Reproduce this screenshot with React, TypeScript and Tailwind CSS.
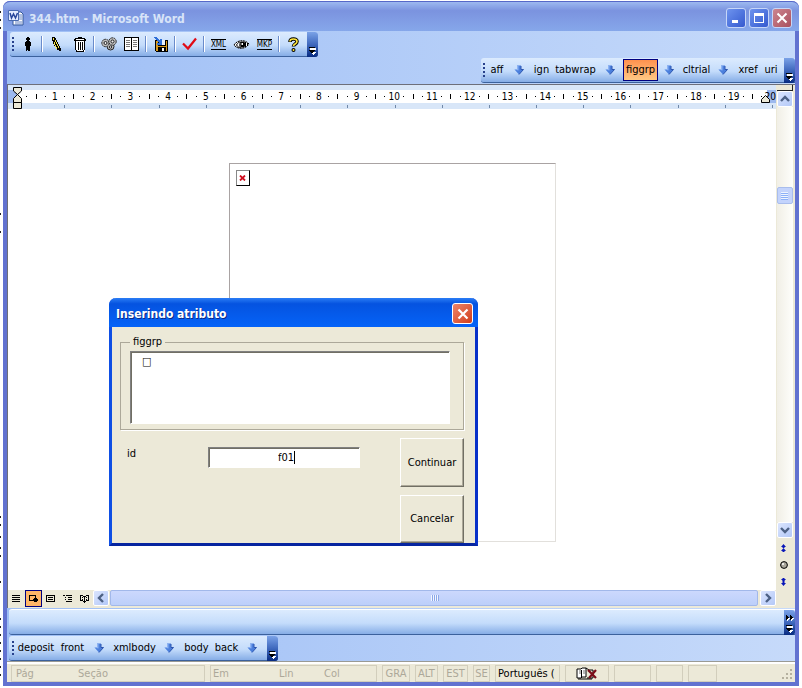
import type { ReactNode } from "react";

const UI_FONT = "font-['DejaVu_Sans_Condensed','Noto_Sans',sans-serif]";
const BAR = "bg-linear-to-b from-[#dcebfe] via-[#c4dcfb] via-55% to-[#86ade6] border-b border-[#3b619c]";

function Grip() {
  return (
    <span className="flex w-[3px] shrink-0 flex-col justify-center gap-[2px]" aria-hidden="true">
      {[0, 1, 2, 3].map((i) => (
        <i key={i} className="size-[2px] bg-[#27418c]" />
      ))}
    </span>
  );
}

function Cap({ more = false }: { more?: boolean }) {
  return (
    <button
      type="button"
      aria-label="Toolbar options"
      className="-mb-px flex w-[11px] shrink-0 flex-col items-center justify-end rounded-r-[3px] bg-linear-to-b from-[#7ba2e7] via-[#3f68bd] to-[#072a81] pb-[2px]"
    >
      <svg width="9" height={more ? 20 : 8} viewBox={more ? "0 -12 9 20" : "0 0 9 8"} shapeRendering="crispEdges">
        {more && (
          <>
            <path d="M2 -9v5l3-2.500zM6 -9v5l3-2.500z" fill="#fff" />
            <path d="M1 -10v5l3-2.500zM5 -10v5l3-2.500z" fill="#000" />
          </>
        )}
        <path d="M2 1h6v2H2zM3 5h5l-2.500 3z" fill="#fff" />
        <path d="M1 0h6v1H1zM1 3h6l-3 4z" fill="#000" />
      </svg>
    </button>
  );
}

function Separator() {
  return (
    <span className="flex w-[6px] shrink-0 justify-center py-[4px]">
      <i className="w-px bg-[#6a8ccb]" />
      <i className="w-px bg-white" />
    </span>
  );
}

function Tool({ label, children }: { label: string; children: ReactNode }) {
  return (
    <button type="button" aria-label={label} className="flex w-[23px] shrink-0 items-center justify-center">
      {children}
    </button>
  );
}

function Expand() {
  return (
    <button type="button" aria-label="Expand" className="flex w-[23px] shrink-0 items-center justify-center pr-[2px]">
      <svg width="10" height="10" viewBox="0 0 10 10">
        <path d="M3 .5h4v4h2.500L5 9.500.5 4.500H3z" fill="#4b7fdc" />
        <path d="M3 .5h1.500v5L2 5 .5 4.500H3z" fill="#8db4f4" />
        <path d="M7 1v3.500h2.500L5 9.500" fill="none" stroke="#2d55ae" />
      </svg>
    </button>
  );
}

function TextTool({ width, children }: { width: string; children: ReactNode }) {
  return (
    <button type="button" className={`flex shrink-0 items-center justify-center ${width}`}>
      {children}
    </button>
  );
}

function TitleBar() {
  const button = "flex size-[20px] items-center justify-center rounded-[3px] border border-[#c6d6f8]";
  return (
    <header className="-mx-[4px] flex h-[30px] shrink-0 items-center rounded-t-[7px] border-t border-[#5668c8] bg-linear-to-b from-[#9db9f0] via-[#7b93df] via-30% to-[#86a7ea] pr-[7px] pl-[5px]">
      <svg width="16" height="16" viewBox="0 0 16 16" className="mt-[2px]">
        <path d="M5 2h8l2 2v11H5z" fill="#fff" stroke="#33569a" />
        <path d="M11 5h3M11 7h3M11 9h3M7 12h7M7 14h7" stroke="#6483c4" />
        <path d="M.5.5h10v10H.5z" fill="#e4edff" stroke="#4a6bb0" />
        <path d="M2 3l1.500 5L5.500 4l2 4L9.500 3" fill="none" stroke="#27479b" strokeWidth="1.500" />
      </svg>
      <h1 className="ml-[5px] pt-[4px] text-[12px] leading-[16px] font-bold text-[#d8e4f8]">344.htm - Microsoft Word</h1>
      <div className="ml-auto flex gap-[3px] pt-[3px]">
        <button type="button" aria-label="Minimize" className={`${button} bg-linear-to-br from-[#6e93ee] to-[#3659cf]`}>
          <svg width="12" height="12"><path d="M2 8h6v3H2z" fill="#fff" /></svg>
        </button>
        <button type="button" aria-label="Maximize" className={`${button} bg-linear-to-br from-[#6e93ee] to-[#3659cf]`}>
          <svg width="12" height="12" shapeRendering="crispEdges"><path d="M1 1h10v10H1zM2 4v6h8V4z" fill="#fff" fillRule="evenodd" /></svg>
        </button>
        <button type="button" aria-label="Close" className={`${button} bg-linear-to-br from-[#cc8590] to-[#a9505e]`}>
          <svg width="12" height="12"><path d="M1.500 1.500l9 9M10.500 1.500l-9 9" stroke="#fff" strokeWidth="2" /></svg>
        </button>
      </div>
    </header>
  );
}

function MainToolbar() {
  return (
    <div className="flex h-[26px] shrink-0 pt-px">
      <div role="toolbar" aria-label="Markup" className={`ml-[3px] flex w-[308px] rounded-[3px] ${BAR}`}>
        <div className="flex w-[6px] justify-center pl-px"><Grip /></div>
        <Tool label="Author">
          <svg width="6" height="14" shapeRendering="crispEdges">
            <path d="M2 0h2v1h1v2H4v1H2V3H1V1h1zM1 4h4v1h1v4H5v5H3v-1H2v1H1V9H0V5h1z" />
          </svg>
        </Tool>
        <Separator />
        <Tool label="Edit">
          <svg width="10" height="15" viewBox="0 0 10 15" shapeRendering="crispEdges">
            <path d="M0 0h3v1h1v2h1v2h1v2h1v2h1v2h1v3H7v-1H5v-1H4v-2H3V9H2V7H1V4H0z" />
            <path d="M1 1h1v2H1zM3 3h1v2h1v2h1v2h1v2H6V9H5V7H4V5H3zM2 5h1v3h1v2h1v2H4v-2H3V8H2z" fill="#f6e64f" />
          </svg>
        </Tool>
        <Tool label="Delete">
          <svg width="12" height="15" shapeRendering="crispEdges">
            <path d="M1 4h10v11H2z" fill="#fff" /><path d="M4 0h4v1h3v1h1v2H0V2h1V1h3zM1 4h1v9h1v2H2v-2H1zM10 4h1v9h-1v2H9v-2h1zM2 14h8v1H2zM4 5h1v8H4zM6 5h1v8H6zM8 5h1v8H8z" />
            <path d="M2 2h8v1H2z" fill="#fff" />
          </svg>
        </Tool>
        <Separator />
        <Tool label="Settings">
          <svg width="16" height="14" viewBox="0 0 16 14" fill="#bdbdbd" stroke="#222">
            <circle cx="9.500" cy="9.500" r="3.500" /><circle cx="4.500" cy="6" r="3.700" strokeDasharray="2 .6" /><circle cx="11.500" cy="4.500" r="3.700" strokeDasharray="2 .6" />
            <circle cx="4.500" cy="6" r="1.500" fill="#eee" /><circle cx="11.500" cy="4.500" r="1.500" fill="#eee" /><circle cx="9.500" cy="10" r="1.200" fill="#eee" />
          </svg>
        </Tool>
        <Tool label="Pages">
          <svg width="15" height="14" shapeRendering="crispEdges">
            <path d="M0 0h15v14H0z" /><path d="M1 1h6v12H1zM8 1h6v12H8z" fill="#fff" />
            <path d="M2 3.500h4M2 5.500h4M2 7.500h4M2 9.500h4M9 3.500h4M9 5.500h4M9 7.500h4M9 9.500h4" stroke="#777" />
          </svg>
        </Tool>
        <Separator />
        <Tool label="Save">
          <svg width="14" height="15" viewBox="0 0 14 15" shapeRendering="crispEdges">
            <path d="M1 3h13v12H2l-1-1z" /><path d="M2 4h2v5h8V4h1v10h-1v-4H4v4H2z" fill="#d99a1c" /><path d="M5 3h6v5H5z" fill="#e8f1ff" /><path d="M8 11h2v3H8z" fill="#fff" />
            <path d="M0 0h2l4 4V2h2v6H3V6h2L0 1z" fill="#2f6fd8" />
          </svg>
        </Tool>
        <Separator />
        <Tool label="Validate">
          <svg width="16" height="14"><path d="M1 6.500l5 5L14 1.500" fill="none" stroke="#e00b16" strokeWidth="2.200" /></svg>
        </Tool>
        <Separator />
        <Tool label="XML"><span className="border-y border-black text-[8px] leading-[9px]">XML</span></Tool>
        <Tool label="View">
          <svg width="17" height="11" viewBox="0 0 17 11">
            <path d="M1 6c3-5 11-6 15-1-3 5-11 6-15 1z" fill="#fff" stroke="#000" strokeDasharray="2 .6" />
            <path d="M3.500 6c1-2 2.500-3 4-3-1 2-1 4 0 5.500-2 0-3-1-4-2.500z" fill="#fff" stroke="#000" />
            <path d="M8 2.500h3c2 2 2 4 0 6H8c-1-2-1-4 0-6z" /><path d="M8.500 4h1.500v2H8.500z" fill="#fff" />
            <path d="M12.500 3v5M14.500 4v3" stroke="#000" />
          </svg>
        </Tool>
        <Tool label="MKP"><span className="border-y border-black text-[8px] leading-[9px]">MKP</span></Tool>
        <Separator />
        <Tool label="Help">
          <svg width="11" height="15" viewBox="0 0 11 15" fill="none">
            <path d="M2 5C2 1 9 1 9 4.500 9 7 5.500 7 5.500 9.500" stroke="#000" strokeWidth="3.600" /><circle cx="5.500" cy="13" r="2" fill="#000" />
            <path d="M2 4.500C2 1.200 9 1.200 9 4.500 9 7 5.500 7 5.500 9" stroke="#ffe63b" strokeWidth="1.600" /><circle cx="5.500" cy="13" r="1" fill="#ffe63b" />
          </svg>
        </Tool>
        <div className="ml-auto flex"><Cap /></div>
      </div>
    </div>
  );
}

function TagToolbar() {
  return (
    <div className="flex h-[27px] shrink-0 justify-end pt-px pb-px">
      <div role="toolbar" aria-label="Tags" className={`flex w-[314px] rounded-l-[3px] ${BAR}`}>
        <div className="flex w-[5px] justify-end"><Grip /></div>
        <TextTool width="w-[22px]">aff</TextTool>
        <Expand />
        <TextTool width="w-[21px]">ign</TextTool>
        <TextTool width="w-[47px]">tabwrap</TextTool>
        <Expand />
        <button type="button" aria-pressed="true" className="my-px ml-px flex w-[35px] shrink-0 items-center justify-center border border-[#000080] bg-linear-to-b from-[#fe914e] to-[#ffc884]">
          figgrp
        </button>
        <Expand />
        <TextTool width="w-[31px]">cltrial</TextTool>
        <Expand />
        <TextTool width="w-[26px]">xref</TextTool>
        <TextTool width="w-[20px]">uri</TextTool>
        <div className="ml-auto flex"><Cap /></div>
      </div>
    </div>
  );
}

function Ruler() {
  const marks = Array.from({ length: 20 }, (_, i) => i + 1);
  return (
    <div className="relative h-[24px] shrink-0 overflow-hidden bg-[#d8e6f8] pt-[5px]">
      <div className="flex h-[13px] bg-white">
        <i className="w-[9px] shrink-0 bg-[#9db9ee]" />
        <div className="ml-[5px] flex flex-1">
          {marks.map((n) => (
            <div key={n} className="grid w-0 flex-1 grid-cols-4 items-center text-[10px] leading-[13px]">
              <i className="mx-auto size-px bg-black" />
              <i className="mx-auto h-[5px] w-px bg-black" />
              <i className="mx-auto size-px bg-black" />
              <span className={n === 20 ? "flex justify-end bg-[#9db9ee]" : "flex justify-center"}>{n}</span>
            </div>
          ))}
        </div>
      </div>
      <div className="mt-[2px] mr-[3px] ml-[10px] flex h-[3px]">
        {Array.from({ length: 16 }, (_, i) => (
          <i key={i} className="flex-1 border-r border-[#7088a8]" />
        ))}
      </div>
      <svg className="absolute top-[2px] left-[5px]" width="9" height="22" viewBox="0 0 9 22" fill="#ece9d8" stroke="#000">
        <path d="M.5.500h8V4l-4 3.500L.5 4zM.5 15.500v-4l4-4 4 4v4zM.5 15.500h8v6h-8z" />
      </svg>
      <svg className="absolute top-[9px] right-[6px]" width="9" height="9" fill="#ece9d8" stroke="#000">
        <path d="M.5 8.500v-3l4-4 4 4v3z" />
      </svg>
    </div>
  );
}

const SCROLL_BUTTON = "flex size-[16px] shrink-0 items-center justify-center rounded-[2px] border border-white bg-linear-to-br from-[#dbe5fe] to-[#b3c8f7]";

function Chevron({ d }: { d: string }) {
  return (
    <svg width="10" height="10"><path d={d} fill="none" stroke="#4d6185" strokeWidth="2.400" /></svg>
  );
}

function VerticalScroll() {
  return (
    <div className="flex w-[19px] shrink-0 flex-col items-center bg-[#ece9d8] pr-[2px]">
      <i className="h-[6px] w-[16px] shrink-0 border-r border-b border-[#222] bg-[#ece9d8]" />
      <button type="button" aria-label="Scroll up" className={SCROLL_BUTTON}><Chevron d="M1 7l4-4 4 4" /></button>
      <div className="flex w-[16px] flex-1 flex-col bg-linear-to-r from-[#f1efe6] to-[#fefefb] pt-[80px]">
        <div className="flex h-[17px] flex-col items-center justify-center gap-px rounded-[2px] border border-[#a9bdec] bg-[#c3d3fc]">
          {[0, 1, 2, 3].map((i) => <i key={i} className="h-px w-[7px] bg-[#eef4fe] shadow-[0_1px_0_#8cb0f8]" />)}
        </div>
      </div>
      <button type="button" aria-label="Scroll down" className={SCROLL_BUTTON}><Chevron d="M1 3l4 4 4-4" /></button>
      <div className="flex h-[70px] flex-col items-center gap-[9px] pt-[6px] pr-[2px]">
        <button type="button" aria-label="Previous page">
          <svg width="7" height="8" className="block" fill="#0a17b8"><path d="M3.500 0L6 3H1zM2.500 3h2v1h-2zM3.500 4L6 7H1zM2.500 6h2v2h-2z" /></svg>
        </button>
        <button type="button" aria-label="Browse object">
          <svg width="8" height="8" className="block"><circle cx="4" cy="4" r="3.400" fill="#aaa79b" stroke="#000" /><circle cx="3" cy="3" r="1" fill="#fff" /></svg>
        </button>
        <button type="button" aria-label="Next page">
          <svg width="7" height="8" className="block" fill="#0a17b8"><path d="M1 1h5L3.500 4zM1 5h5L3.500 8zM2.500 0h2v5h-2z" /></svg>
        </button>
      </div>
    </div>
  );
}

function ViewButton({ label, d, active = false }: { label: string; d: string; active?: boolean }) {
  return (
    <button
      type="button"
      aria-label={label}
      className={`flex h-[17px] w-[17px] shrink-0 items-center justify-center ${active ? "border border-[#000080] bg-[#ffb668]" : ""}`}
    >
      <svg width="9" height="9" shapeRendering="crispEdges" fill="none" stroke="#000"><path d={d} /></svg>
    </button>
  );
}

function BottomScroll() {
  return (
    <div className="flex h-[18px] shrink-0 bg-[#ece9d8]">
      <ViewButton label="Normal" d="M0 1.500h8M0 3.500h8M0 5.500h8M0 7.500h8" />
      <ViewButton label="Web layout" active d="M.5 1.500h6v5h-6zM5 4.500h3M4 5.500h5M4 6.500h5M5 7.500h3" />
      <ViewButton label="Print layout" d="M.5 1.500h8v6h-8zM2 3.500h5M2 5.500h5" />
      <ViewButton label="Outline" d="M0 1.500h2M3 1.500h6M2 3.500h1M5 3.500h4M2 5.500h1M5 5.500h4M3 7.500h6" />
      <ViewButton label="Reading layout" d="M.5 1v6M0 1.500h3M3 2.500h1M4.500 2v7M5 2.500h1M6 1.500h3M8.500 1v6M0 6.500h3M6 6.500h3M3 7.500h3M2 3.500h1M2 5.500h1M6 3.500h1M6 5.500h1" />
      <button type="button" aria-label="Scroll left" className={SCROLL_BUTTON}><Chevron d="M7 1L3 5l4 4" /></button>
      <div className="ml-px flex flex-1 pb-[2px]">
        <div className="mr-[2px] flex flex-1 items-center justify-center gap-px rounded-[2px] border border-[#a2b8ea] bg-linear-to-b from-[#ccd8fd] to-[#bccffa]">
          {[0, 1, 2, 3].map((i) => <i key={i} className="h-[6px] w-px bg-[#f3f6fe] shadow-[1px_0_0_#8ca8e8]" />)}
        </div>
      </div>
      <button type="button" aria-label="Scroll right" className={SCROLL_BUTTON}><Chevron d="M3 1l4 4-4 4" /></button>
    </div>
  );
}

function Document() {
  return (
    <div className="flex min-h-0 flex-1 border-t border-l border-[#6d6f7a]">
      <div className="flex min-w-0 flex-1 flex-col bg-white">
        <Ruler />
        <main className="min-h-0 flex-1 pt-[54px]">
          <figure className="mx-auto h-[379px] w-[327px] border border-t-[#a9a3a3] border-r-[#e2e0dc] border-b-[#e2e0dc] border-l-[#a9a3a3] pt-[6px] pl-[6px]">
            <span role="img" aria-label="Missing figure" className="flex h-[16px] w-[14px] items-center justify-center border border-[#888] border-r-black border-b-black bg-white">
              <svg width="7" height="6"><path d="M1 .5l5 5M6 .5l-5 5" stroke="#cf1020" strokeWidth="1.800" /></svg>
            </span>
          </figure>
        </main>
        <BottomScroll />
      </div>
      <VerticalScroll />
    </div>
  );
}

function BottomToolbars() {
  return (
    <>
      <div className={`mt-px ml-[2px] flex h-[26px] shrink-0 justify-end rounded-l-[3px] border-t border-t-white ${BAR}`}><Cap more /></div>
      <div className="flex h-[26px] shrink-0 pt-px">
        <div role="toolbar" aria-label="Structure" className={`ml-[2px] flex w-[269px] rounded-[3px] ${BAR}`}>
          <div className="flex w-[6px] justify-end"><Grip /></div>
          <TextTool width="w-[42px]">deposit</TextTool>
          <TextTool width="w-[31px]">front</TextTool>
          <Expand />
          <TextTool width="w-[47px]">xmlbody</TextTool>
          <Expand />
          <TextTool width="w-[31px]">body</TextTool>
          <TextTool width="w-[29px]">back</TextTool>
          <Expand />
          <div className="ml-auto flex"><Cap /></div>
        </div>
      </div>
    </>
  );
}

function Cell({ className, children }: { className: string; children?: ReactNode }) {
  return <div className={`flex shrink-0 items-center overflow-hidden border border-[#d2cebc] whitespace-nowrap ${className}`}>{children}</div>;
}

function StatusBar() {
  return (
    <footer className="flex h-[21px] shrink-0 gap-[5px] border-t border-[#9a9a94] bg-[#ece9d8] pt-[3px] pl-[4px] text-[#aca899] shadow-[inset_0_2px_0_#fff]">
      <Cell className="w-[194px] pl-[4px]"><span className="w-[62px]">Pág</span><span>Seção</span></Cell>
      <Cell className="w-[167px] pl-[2px]"><span className="w-[66px]">Em</span><span className="w-[45px]">Lin</span><span>Col</span></Cell>
      <Cell className="w-[28px] justify-center">GRA</Cell>
      <Cell className="w-[23px] justify-center">ALT</Cell>
      <Cell className="w-[25px] justify-center">EST</Cell>
      <Cell className="w-[17px] justify-center">SE</Cell>
      <Cell className="w-[65px] pl-[2px] text-black">Português (</Cell>
      <Cell className="w-[44px] justify-center">
        <svg width="22" height="13" viewBox="0 0 22 13">
          <path d="M1 2h4l1-1h4v9H6l-1 1H1z" fill="#fff" stroke="#000" /><path d="M10 1l3 2h4v8h-6M2 12h14M5.500 3v7" fill="none" stroke="#000" />
          <path d="M3 4h2M3 6h2M7 4h2M7 6h2" stroke="#777" /><path d="M12 3l8 8M20 3l-7 8" stroke="#7a0c18" strokeWidth="2.200" />
        </svg>
      </Cell>
      <Cell className="w-[37px]" />
      <Cell className="w-[27px]" />
      <Cell className="w-[29px]" />
      <svg width="12" height="12" className="mt-auto mr-px mb-px ml-auto" fill="#b5b19f">
        <path d="M8 0h2v2H8zM4 4h2v2H4zM8 4h2v2H8zM0 8h2v2H0zM4 8h2v2H4zM8 8h2v2H8z" />
      </svg>
    </footer>
  );
}

function AttributeDialog() {
  const sunken = "border border-t-[#808080] border-l-[#808080] border-r-white border-b-white shadow-[inset_1px_1px_0_#716f64] bg-white";
  const button = "w-[64px] border border-t-white border-l-white border-r-[#716f64] border-b-[#716f64] shadow-[inset_-1px_-1px_0_#aca899]";
  return (
    <section role="dialog" aria-labelledby="dialog-title" className="absolute top-[298px] left-[109px] flex w-[369px] flex-col rounded-t-[7px] border-x-[3px] border-b-[3px] border-[#0831c9] border-b-[#0625a0] border-l-[#0f4fe4] bg-[#ece9d8]">
      <header className="-mx-[3px] flex h-[29px] items-center rounded-t-[7px] bg-linear-to-b from-[#2a7cf5] via-[#0553e0] via-20% to-[#0563f8] pr-[5px] pl-[7px]">
        <h2 id="dialog-title" className="pt-[3px] text-[12px] leading-[16px] font-bold text-white [text-shadow:1px_1px_#0b2a86]">Inserindo atributo</h2>
        <button type="button" aria-label="Close" className="mt-[2px] ml-auto flex size-[21px] items-center justify-center rounded-[3px] border border-white bg-linear-to-br from-[#ee8468] to-[#d03a14]">
          <svg width="12" height="12"><path d="M1.500 1.500l9 9M10.500 1.500l-9 9" stroke="#fff" strokeWidth="2.200" /></svg>
        </button>
      </header>
      <div className="pt-[9px] pr-[11px] pl-[8px]">
        <fieldset className="border border-[#aca899] pr-[13px] pb-[5px] pl-[9px] shadow-[1px_1px_0_#fff]">
          <legend className="px-[3px] leading-[12px]">figgrp</legend>
          <textarea readOnly aria-label="figgrp" defaultValue="□" className={`mt-[3px] block h-[73px] w-full resize-none pt-[3px] pl-[11px] leading-[14px] font-bold outline-none ${sunken}`} />
        </fieldset>
        <div className="flex items-start pt-[8px] pl-[7px]">
          <label htmlFor="attribute-id" className="w-[81px] pt-[9px] leading-[14px]">id</label>
          <div className={`mt-[9px] flex h-[21px] w-[152px] items-center justify-center pl-[5px] ${sunken}`}>
            <input id="attribute-id" defaultValue="f01" className="field-sizing-content bg-transparent text-center outline-none" />
            <i className="h-[13px] w-px bg-black" />
          </div>
          <div className="ml-auto flex flex-col gap-[8px]">
            <button type="button" className={`h-[49px] ${button}`}>Continuar</button>
            <button type="button" className={`h-[48px] ${button}`}>Cancelar</button>
          </div>
        </div>
      </div>
    </section>
  );
}

export default function App() {
  return (
    <div className={`relative flex h-screen min-h-[560px] bg-white pt-px pr-[3px] pb-[2px] text-[11px] leading-[14px] text-black ${UI_FONT}`}>
      <svg className="w-[3px] shrink-0 self-stretch" aria-hidden="true">
        <path d="M.5 10v18M.5 212v8M.5 230v4M.5 515v12M.5 535v6M.5 546v12M.5 580v8M.5 617v60" stroke="#222" strokeDasharray="2 6" />
      </svg>
      <div className="flex min-w-0 flex-1 flex-col rounded-t-[7px] border-x-4 border-b-4 border-[#6272d0] bg-linear-to-r from-[#9ebef5] to-[#c6dafa]">
        <TitleBar />
        <MainToolbar />
        <TagToolbar />
        <Document />
        <BottomToolbars />
        <StatusBar />
      </div>
      <AttributeDialog />
    </div>
  );
}
